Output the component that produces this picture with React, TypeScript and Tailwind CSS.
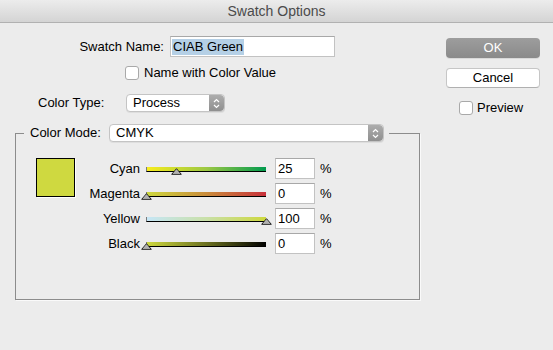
import React from "react";

type Channel = {
	name: string;
	value: number;
	gradient: string;
};

const channels: Channel[] = [
	{ name: "Cyan", value: 25, gradient: "bg-[linear-gradient(to_right,#f7ec1c,#9cc844,#009a4e)]" },
	{ name: "Magenta", value: 0, gradient: "bg-[linear-gradient(to_right,#cdd83e,#c98b3a,#c8303b)]" },
	{ name: "Yellow", value: 100, gradient: "bg-[linear-gradient(to_right,#c6e6f6,#c9e0a8,#cdd83e)]" },
	{ name: "Black", value: 0, gradient: "bg-[linear-gradient(to_right,#cdd83e,#6b7020,#000000)]" },
];

const Stepper = () => (
	<div className="w-[15px] self-stretch flex items-center justify-center rounded-r-[4px] bg-[linear-gradient(#adadad,#8f8f8f)]">
		<svg width="7" height="11" viewBox="0 0 7 11" fill="none">
			<path d="M1 4 L3.5 1.5 L6 4" stroke="#fff" strokeWidth="1.2" />
			<path d="M1 7 L3.5 9.5 L6 7" stroke="#fff" strokeWidth="1.2" />
		</svg>
	</div>
);

const Popup = ({ label, width }: { label: string; width: string }) => (
	<div className={`${width} h-[18px] flex bg-white rounded-[4px] border border-[#c4c4c4] shadow-[0_1px_0_rgba(0,0,0,0.06)]`}>
		<span className="flex-1 pl-[6px] leading-[16px] text-[13px] text-black">{label}</span>
		<Stepper />
	</div>
);

const Checkbox = () => (
	<div className="w-[14px] h-[14px] bg-white border border-[#a9a9a9] rounded-[3px] shrink-0" />
);

const Thumb = ({ value }: { value: number }) => (
	<svg
		className="absolute top-[10px]"
		style={{ left: `${value * 1.2 - 5}px` }}
		width="11"
		height="7"
		viewBox="0 0 11 7">
		<path d="M5.5 0.7 L10.3 6.3 L0.7 6.3 Z" fill="#c9c9c9" stroke="#1a1a1a" strokeWidth="1" />
		<path d="M5.5 1.8 L8.6 5.3 L2.4 5.3 Z" fill="#b0b0b0" />
	</svg>
);

const ChannelRow = ({ name, value, gradient }: Channel) => (
	<div className="flex items-center h-[21px] leading-[16px]">
		<span className="w-[65px] text-right text-[13px] text-black">{name}</span>
		<div className="relative ml-[6px] w-[120px] h-[21px]">
			<div className={`mt-[9px] h-[5px] border-b border-b-black border-l border-l-[#7a7a7a] ${gradient}`} />
			<Thumb value={value} />
		</div>
		<div className="ml-[9px] w-[40px] h-[21px] bg-white border border-[#c2c2c2] border-t-[#a8a8a8] pl-[2px] leading-[19px] text-[13px] text-black">
			{value}
		</div>
		<span className="ml-[5px] text-[13px] text-black">%</span>
	</div>
);

export default function App() {
	return (
		<div
			className="w-[553px] h-[350px] bg-[#ececec] overflow-hidden text-black leading-[16px]"
			style={{ fontFamily: '"Liberation Sans", Arial, sans-serif' }}>
			<div className="h-[23px] border-b border-b-[#b1b1b1] bg-[linear-gradient(#ececec,#d4d4d4)] flex items-center justify-center">
				<span className="text-[14px] text-[#4b4b4b]">Swatch Options</span>
			</div>
			<div className="flex">
				<div className="w-[446px]">
					<div className="mt-[13px] h-[21px] flex items-center">
						<span className="w-[164px] text-right text-[13px]">Swatch Name:</span>
						<div className="ml-[6px] w-[165px] h-[21px] bg-white border border-[#c2c2c2] border-t-[#a8a8a8] pl-[1px] flex items-center">
							<span className="bg-[#b5d0e6] text-[13px] leading-[16px] px-[1px]">CIAB Green</span>
						</div>
					</div>
					<div className="mt-[9px] h-[14px] pl-[125px] flex items-center">
						<Checkbox />
						<span className="ml-[5px] text-[13px]">Name with Color Value</span>
					</div>
					<div className="mt-[14px] h-[18px] pl-[38px] flex items-center">
						<span className="w-[88px] text-[13px]">Color Type:</span>
						<Popup label="Process" width="w-[99px]" />
					</div>
					<fieldset className="mt-[12px] ml-[15px] w-[405px] border border-[#8c8c8c] shadow-[1px_1px_0_#fafafa] px-0">
						<legend className="ml-[8px] h-[18px] pl-[6px] pr-[5px] flex items-center">
							<span className="w-[79px] text-[13px]">Color Mode:</span>
							<Popup label="CMYK" width="w-[275px]" />
						</legend>
						<div className="pt-[16px] pb-[45px] pl-[20px] flex items-start">
							<div className="w-[39px] h-[39px] bg-[#cfd940] border border-black shadow-[1px_1px_0_#fff] shrink-0" />
							<div className="flex flex-col gap-[4px]">
								{channels.map((c) => (
									<ChannelRow key={c.name} {...c} />
								))}
							</div>
						</div>
					</fieldset>
				</div>
				<div className="w-[94px] pt-[15px] flex flex-col">
					<button className="h-[20px] rounded-[4px] bg-[linear-gradient(#9d9d9d,#8a8a8a)] text-white text-[13px] leading-[20px] shadow-[0_1px_0_rgba(0,0,0,0.08)]">
						OK
					</button>
					<button className="mt-[10px] h-[20px] rounded-[4px] bg-white border border-[#c6c6c6] border-b-[#b0b0b0] text-[13px] leading-[18px]">
						Cancel
					</button>
					<div className="mt-[13px] h-[14px] pl-[13px] flex items-center">
						<Checkbox />
						<span className="ml-[4px] text-[13px]">Preview</span>
					</div>
				</div>
			</div>
		</div>
	);
}
